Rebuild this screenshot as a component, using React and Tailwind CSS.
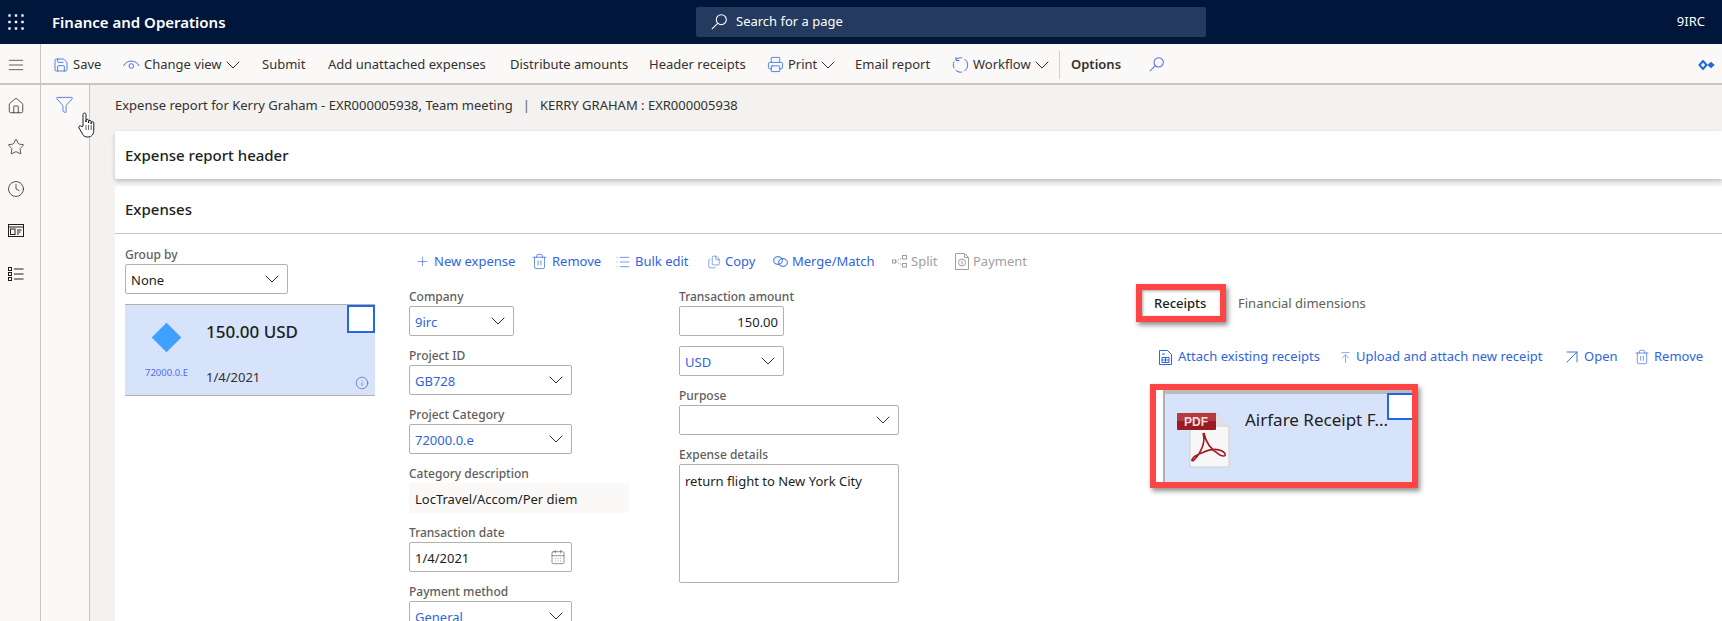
import React from 'react';
import { Menu, Home, Star, Clock, Funnel, Save, Printer, ChevronDown, Plus, Trash2, List, Files, ArrowUpToLine, ArrowUpRight, Info, CalendarDays } from 'lucide-react';

const ToolButton = ({ width, icon, children, chevron }) => (
    <div className={`flex items-center shrink-0 ${width}`}>
        {icon && <span className="mr-[4px] flex">{icon}</span>}
        <span className="whitespace-nowrap">{children}</span>
        {chevron && <ChevronDown size={24} strokeWidth={1} className="-my-2 -ml-[1px] text-[#323130]" />}
    </div>
);

const ActionLink = ({ width, icon, disabled, children }) => (
    <div className={`flex items-center shrink-0 ${width} ${disabled ? 'text-[#a19f9d]' : 'text-[#2f65dc]'}`}>
        <span className="mr-[4px] flex">{icon}</span>
        <span className="whitespace-nowrap">{children}</span>
    </div>
);

const Field = ({ label, width, children }) => (
    <div className={`mb-[10px] ${width}`}>
        <div className="h-[19px] text-[12px] leading-[19px] text-[#605e5c] font-medium whitespace-nowrap">{label}</div>
        {children}
    </div>
);

const SelectBox = ({ value, link = true }) => (
    <div className="h-[30px] flex items-center justify-between border border-[#b3b0ad] rounded-[2px] bg-white pl-[5px] pr-[3px]">
        <span className={`pt-[3px] ${link ? 'text-[#2f65dc]' : 'text-[#201f1e]'}`}>{value}</span>
        <ChevronDown size={24} strokeWidth={1} className="text-[#323130]" />
    </div>
);

const WaffleIcon = () => (
    <svg width="16" height="16" viewBox="0 0 16 16" fill="white">
        {[1.5, 8, 14.5].map(y => [1.5, 8, 14.5].map(x => <rect key={`${x}-${y}`} x={x - 1.2} y={y - 1.2} width="2.4" height="2.4" />))}
    </svg>
);

const LeftSearchIcon = ({ size, color }) => (
    <svg width={size} height={size} viewBox="0 0 16 16" fill="none" stroke={color} strokeWidth="1.1">
        <circle cx="10.3" cy="5.7" r="5" />
        <path d="M6.7 9.3L0.8 15.2" />
    </svg>
);

const WorkspaceIcon = () => (
    <svg width="16" height="14" viewBox="0 0 16 14" fill="none" stroke="#201f1e">
        <rect x="0.5" y="0.5" width="15" height="12" />
        <path d="M0.5 3h15" />
        <rect x="2.5" y="5" width="4.5" height="5.5" />
        <path d="M9 6h4.5M9 8h3.5M9 10h2" />
    </svg>
);

const ModulesIcon = () => (
    <svg width="16" height="14" viewBox="0 0 16 14" fill="none" stroke="#201f1e">
        <rect x="0.5" y="0.5" width="3" height="3" />
        <rect x="0.5" y="5.5" width="3" height="3" />
        <rect x="0.5" y="10.5" width="3" height="3" />
        <path d="M6 2h9.5M6 7h9.5M6 12h9.5" />
    </svg>
);

const ChangeViewIcon = () => (
    <svg width="17" height="14" viewBox="0 0 17 14" fill="none" stroke="#4f6bed">
        <path d="M0.5 8C3 1.5 13.5 1.5 16 8" />
        <circle cx="8.3" cy="8" r="2.3" />
    </svg>
);

const WorkflowIcon = () => (
    <svg width="17" height="18" viewBox="0 0 17 18" fill="none" stroke="#4f6bed">
        <circle cx="8.5" cy="9" r="7.2" strokeDasharray="7 2.5" />
        <path d="M4 1v3.5h3.5" />
    </svg>
);

const SharePointIcon = () => (
    <svg width="17" height="10" viewBox="0 0 17 10" fill="none" stroke="#2266e3" strokeWidth="2">
        <path d="M5 1l3.5 4L5 9 1.5 5z" />
        <path d="M13 3l2.2 2L13 7l-2.2-2z" fill="#2266e3" />
    </svg>
);

const MergeIcon = () => (
    <svg width="15" height="11" viewBox="0 0 15 11" fill="none" stroke="#2f65dc">
        <ellipse cx="5" cy="4.5" rx="4.3" ry="3.8" />
        <ellipse cx="10" cy="6.5" rx="4.3" ry="3.8" />
    </svg>
);

const SplitIcon = () => (
    <svg width="15" height="13" viewBox="0 0 15 13" fill="none" stroke="#a19f9d">
        <rect x="0.5" y="5" width="3" height="3" />
        <rect x="10.5" y="0.5" width="4" height="3.5" />
        <rect x="10.5" y="8.5" width="4" height="3.5" />
        <path d="M3.5 6.5L10.5 2.5M3.5 6.5L10.5 10" strokeDasharray="1.5 1" />
    </svg>
);

const PaymentIcon = () => (
    <svg width="14" height="17" viewBox="0 0 14 17" fill="none" stroke="#a19f9d">
        <path d="M0.5 0.5h9l4 4v12h-13z" />
        <circle cx="7" cy="9.5" r="3.5" />
        <path d="M9.5 0.5v4h4M7 7.5v4" />
    </svg>
);

const AttachIcon = () => (
    <svg width="13" height="15" viewBox="0 0 13 15" fill="none" stroke="#2f65dc" className="mr-[2px]">
        <path d="M0.5 0.5h8l4 4v10h-12z" />
        <path d="M3 7.5h7v5H3zM3 10h7M6.5 7.5v5M3 4h3" />
    </svg>
);

const PdfIcon = () => (
    <svg width="54" height="56" viewBox="0 0 54 56" fill="none">
        <path d="M13 1h26l13 14v40H13z" fill="#f7f7f7" stroke="#cfcfcf" />
        <path d="M39 1l13 14H39z" fill="#dfe0e2" />
        <rect x="0" y="1" width="39" height="17" rx="1" fill="#9a1b23" />
        <rect x="0" y="1" width="39" height="8" rx="1" fill="#b53a40" />
        <text x="19" y="14" textAnchor="middle" fontSize="12" fontWeight="700" fill="#f6dcdc" fontFamily="Liberation Sans, sans-serif">PDF</text>
        <path d="M26 21c3 9-2 20-9 27-4 3-2-3 3-5 9-4 17-8 25-4 5 3 4 7-2 4-7-4-14-10-16-22" stroke="#a31c25" strokeWidth="1.6" />
    </svg>
);

const HandCursor = () => (
    <svg width="19" height="26" viewBox="0 0 19 26" fill="white" stroke="#1a1a1a" strokeWidth="1" className="absolute left-[78px] top-[112px]">
        <path d="M5 14V2.5C5 0.5 8 0.5 8 2.5V10l0-1.5c0-1.6 2.6-1.6 2.6 0V11V9.5c0-1.5 2.6-1.5 2.6 0V12v-1.2c0-1.5 2.6-1.5 2.6 0V18c0 4-2 7-6 7H9c-3 0-4-2-5-4l-3-5c-1-2 1.5-3 3-1.2z" />
        <path d="M8 13v5M10.6 13v5M13.2 13v5" strokeWidth="0.7" />
    </svg>
);

const App = () => {
    const linkIcon = { strokeWidth: 1, className: 'text-[#2f65dc]' };

    return (
        <div className="relative w-[1722px] h-[621px] overflow-hidden flex flex-col bg-white text-[13px] text-[#323130] font-['Noto_Sans',sans-serif]">
            <header className="h-11 shrink-0 bg-[#00163a] flex items-center text-white">
                <div className="w-[52px] pl-2 flex"><WaffleIcon /></div>
                <div className="w-[644px] text-[15px] font-semibold">Finance and Operations</div>
                <div className="w-[510px] h-[30px] rounded-[2px] bg-[#243a5e] flex items-center pl-[15px]">
                    <span className="mr-[9px] flex"><LeftSearchIcon size={16} color="white" /></span>
                    <span>Search for a page</span>
                </div>
                <div className="ml-auto pr-[17px]">9IRC</div>
            </header>

            <div className="h-[41px] shrink-0 flex items-center bg-[#faf9f8] border-b-2 border-[#c8c6c4] text-[#323130]">
                <div className="w-[41px] shrink-0 h-full border-r border-[#c8c6c4] flex items-center pl-2 pt-[2px]">
                    <Menu size={16} strokeWidth={1} className="scale-x-125" />
                </div>
                <div className="flex items-center pl-3 pt-[2px] flex-1">
                    <ToolButton width="w-[70px]" icon={<Save size={16} strokeWidth={1.2} className="text-[#2266e3]" />}>Save</ToolButton>
                    <ToolButton width="w-[139px]" icon={<ChangeViewIcon />} chevron>Change view</ToolButton>
                    <ToolButton width="w-[66px]">Submit</ToolButton>
                    <ToolButton width="w-[182px]">Add unattached expenses</ToolButton>
                    <ToolButton width="w-[139px]">Distribute amounts</ToolButton>
                    <ToolButton width="w-[118px]">Header receipts</ToolButton>
                    <ToolButton width="w-[88px]" icon={<Printer size={17} strokeWidth={1.1} className="text-[#2266e3]" />} chevron>Print</ToolButton>
                    <ToolButton width="w-[97px]">Email report</ToolButton>
                    <ToolButton width="w-[107px]" icon={<WorkflowIcon />} chevron>Workflow</ToolButton>
                    <div className="w-[90px] h-7 shrink-0 border-l border-[#d2d0ce] pl-[11px] flex items-center font-semibold">Options</div>
                    <LeftSearchIcon size={15} color="#4f6bed" />
                    <div className="ml-auto pr-[7px] flex"><SharePointIcon /></div>
                </div>
            </div>

            <div className="flex-1 flex min-h-0">
                <nav className="w-[41px] shrink-0 bg-[#faf9f8] border-r border-[#c8c6c4] flex flex-col pl-2 pt-[12px] text-[#201f1e]">
                    <Home size={18} strokeWidth={1} className="-ml-[1px] mb-[23px]" />
                    <Star size={18} strokeWidth={1} className="-ml-[1px] mb-[24px]" />
                    <Clock size={18} strokeWidth={1} className="-ml-[1px] mb-[26px]" />
                    <div className="mb-[29px]"><WorkspaceIcon /></div>
                    <ModulesIcon />
                </nav>
                <div className="w-[49px] shrink-0 bg-[#faf9f8] border-r border-[#c8c6c4] pt-[10px] pl-[14px]">
                    <Funnel size={19} strokeWidth={1} className="text-[#2f65dc]" />
                </div>

                <main className="flex-1 min-w-0 bg-[#f3f2f1] pl-[25px]">
                    <div className="h-[42px] mb-[4px] flex items-center text-[#323130]">
                        <span className="whitespace-nowrap">Expense report for Kerry Graham - EXR000005938, Team meeting</span>
                        <span className="mx-[10px] text-[#605e5c]">|</span>
                        <span className="whitespace-nowrap">KERRY GRAHAM : EXR000005938</span>
                    </div>
                    <section className="h-12 bg-white rounded-l-[2px] shadow-[0_2px_4px_rgba(0,0,0,0.22)] flex items-center pl-[10px] text-[15px] font-medium text-[#201f1e]">
                        Expense report header
                    </section>
                    <section className="mt-[7px] h-[500px] bg-white rounded-l-[2px]">
                        <div className="h-12 border-b border-[#c8c6c4] flex items-center pl-[10px] text-[15px] font-medium text-[#201f1e]">Expenses</div>

                        <div className="flex">
                            <div className="w-[284px] shrink-0 pl-[10px] pt-[11px]">
                                <div className="h-[19px] text-[12px] leading-[19px] text-[#605e5c] font-medium">Group by</div>
                                <div className="w-[163px]"><SelectBox value="None" link={false} /></div>
                                <div className="relative mt-[10px] w-[250px] h-[92px] bg-[#d7e3fa] border-y border-[#b3b0ad] flex">
                                    <div className="w-[81px] flex flex-col items-center pt-[22px] pl-[2px]">
                                        <div className="w-[21px] h-[21px] rotate-45 bg-[#40a0ff]" />
                                        <div className="mt-[18px] text-[9.5px] text-[#4f6bed]">72000.0.E</div>
                                    </div>
                                    <div className="flex flex-col">
                                        <div className="mt-[14px] text-[17px] text-[#201f1e] font-medium">150.00 USD</div>
                                        <div className="mt-[23px] text-[#323130]">1/4/2021</div>
                                    </div>
                                    <div className="absolute right-0 top-0 w-7 h-7 border-2 border-[#2266e3] bg-white" />
                                    <Info size={14} strokeWidth={1} className="absolute right-[6px] bottom-[5px] text-[#2f4f9f]" />
                                </div>
                            </div>

                            <div className="flex-1 min-w-0">
                                <div className="h-[53px] pt-[2px] flex items-center pl-[16px]">
                                    <ActionLink width="w-[118px]" icon={<Plus size={15} {...linkIcon} />}>New expense</ActionLink>
                                    <ActionLink width="w-[85px]" icon={<Trash2 size={17} strokeWidth={1} className="-ml-[2px] text-[#2f65dc]" />}>Remove</ActionLink>
                                    <ActionLink width="w-[89px]" icon={<List size={16} strokeWidth={1} className="-ml-[3px] text-[#2f65dc]" />}>Bulk edit</ActionLink>
                                    <ActionLink width="w-[66px]" icon={<Files size={14} {...linkIcon} />}>Copy</ActionLink>
                                    <ActionLink width="w-[119px]" icon={<MergeIcon />}>Merge/Match</ActionLink>
                                    <ActionLink width="w-[63px]" icon={<SplitIcon />} disabled>Split</ActionLink>
                                    <ActionLink width="w-[90px]" icon={<PaymentIcon />} disabled>Payment</ActionLink>
                                </div>

                                <div className="flex">
                                    <div className="w-[280px] shrink-0 pl-[10px]">
                                        <Field label="Company" width="w-[105px]"><SelectBox value="9irc" /></Field>
                                        <Field label="Project ID" width="w-[163px]"><SelectBox value="GB728" /></Field>
                                        <Field label="Project Category" width="w-[163px]"><SelectBox value="72000.0.e" /></Field>
                                        <Field label="Category description" width="w-[220px]">
                                            <div className="h-[30px] flex items-center pl-[6px] pt-[3px] bg-[#faf9f8] text-[#201f1e]">LocTravel/Accom/Per diem</div>
                                        </Field>
                                        <Field label="Transaction date" width="w-[163px]">
                                            <div className="h-[30px] flex items-center justify-between border border-[#b3b0ad] rounded-[2px] pl-[5px] pr-[5px] text-[#201f1e]">
                                                <span className="pt-[3px]">1/4/2021</span>
                                                <CalendarDays size={16} strokeWidth={1} className="text-[#605e5c]" />
                                            </div>
                                        </Field>
                                        <Field label="Payment method" width="w-[163px]"><SelectBox value="General" /></Field>
                                    </div>

                                    <div className="w-[220px] shrink-0">
                                        <Field label="Transaction amount" width="w-[105px]">
                                            <div className="h-[30px] flex items-center justify-end border border-[#b3b0ad] rounded-[2px] pr-[5px] pt-[3px] text-[#201f1e]">150.00</div>
                                        </Field>
                                        <div className="w-[105px] mb-[10px]"><SelectBox value="USD" /></div>
                                        <Field label="Purpose" width="w-[220px]"><SelectBox value="" /></Field>
                                        <Field label="Expense details" width="w-[220px]">
                                            <div className="h-[119px] border border-[#b3b0ad] rounded-[2px] pl-[5px] pt-[7px] text-[#201f1e]">return flight to New York City</div>
                                        </Field>
                                    </div>

                                    <div className="flex-1 min-w-0 pl-[239px] mt-[2px]">
                                        <div className="h-[30px] flex items-center">
                                            <span className="w-[100px] pl-[16px] text-[#201f1e] font-medium">Receipts</span>
                                            <span className="text-[#605e5c]">Financial dimensions</span>
                                        </div>
                                        <div className="mt-[26px] h-[24px] flex items-center pl-[21px]">
                                            <ActionLink width="w-[180px]" icon={<AttachIcon />}>Attach existing receipts</ActionLink>
                                            <ActionLink width="w-[225px]" icon={<ArrowUpToLine size={13} {...linkIcon} />}>Upload and attach new receipt</ActionLink>
                                            <ActionLink width="w-[70px]" icon={<ArrowUpRight size={24} className="text-[#2f65dc] -mx-[4px]" strokeWidth={0.9} />}>Open</ActionLink>
                                            <ActionLink width="w-[70px]" icon={<Trash2 size={16} {...linkIcon} />}>Remove</ActionLink>
                                        </div>
                                        <div className="relative mt-[21px] ml-[25px] w-[249px] h-[92px] bg-[#d7e3fa] border-l-2 border-l-[#b3b0ad] flex">
                                            <div className="absolute top-0 left-0 right-0 h-[4px] bg-[#b3b0ad]/80" />
                                            <div className="ml-[12px] mt-[22px] shrink-0"><PdfIcon /></div>
                                            <div className="ml-[14px] mt-[17px] text-[17px] leading-[26px] text-[#201f1e] whitespace-nowrap">Airfare Receipt F...</div>
                                            <div className="absolute right-0 top-[3px] w-[25px] h-[27px] border-2 border-r-0 border-[#2266e3] bg-white" />
                                        </div>
                                    </div>
                                </div>
                            </div>
                        </div>
                    </section>
                </main>
            </div>

            {/* annotation boxes drawn on top of the screenshot */}
            <div className="absolute left-[1136px] top-[284px] w-[90px] h-[38px] border-[6px] border-[#fe4444] shadow-[2px_3px_5px_rgba(0,0,0,0.45),inset_1px_1px_3px_rgba(0,0,0,0.35)]" />
            <div className="absolute left-[1150px] top-[384px] w-[268px] h-[104px] border-[6px] border-[#fe4444] shadow-[2px_3px_5px_rgba(0,0,0,0.45)]" />
            <HandCursor />
        </div>
    );
};

export default App;
